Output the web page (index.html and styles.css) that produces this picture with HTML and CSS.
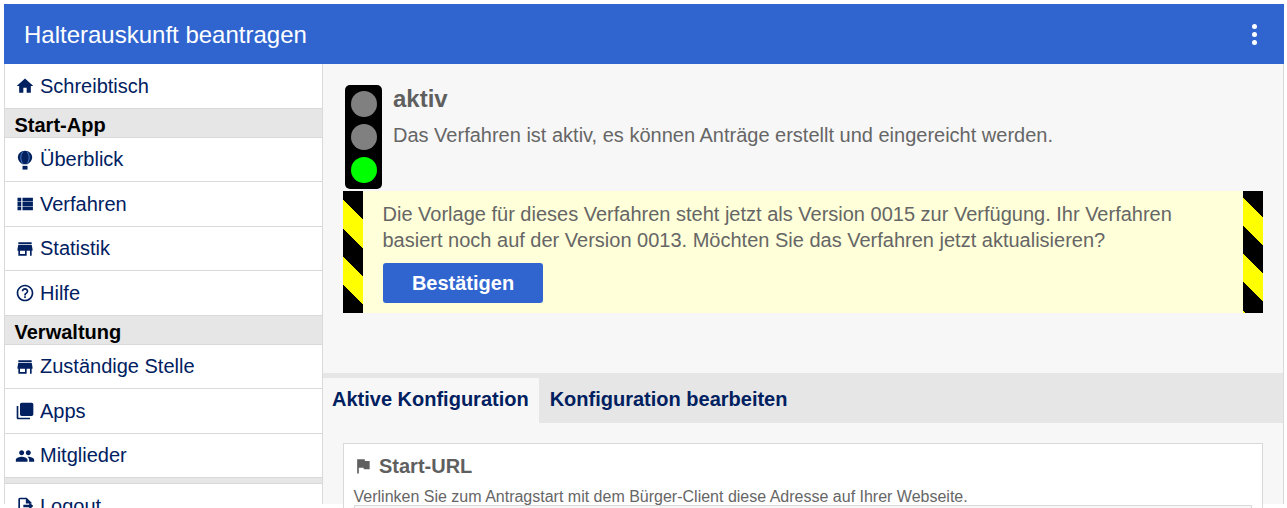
FILE: index.html
```html
<!DOCTYPE html>
<html lang="de">
<head>
<meta charset="utf-8">
<title>Halterauskunft beantragen</title>
<link rel="stylesheet" href="styles.css">
</head>
<body>
<div class="app">
  <header class="topbar">
    <span class="topbar-title">Halterauskunft beantragen</span>
    <span class="kebab"><i></i><i></i><i></i></span>
  </header>
  <div class="body-row">
    <nav class="sidebar">
      <a class="nav-item"><svg class="icon" viewBox="0 0 24 24"><path d="M10 20v-6h4v6h5v-8h3L12 3 2 12h3v8z"/></svg>Schreibtisch</a>
      <div class="nav-head">Start-App</div>
      <a class="nav-item"><svg class="icon" viewBox="0 0 24 24"><path d="M12 1C7 1 3.400 4.600 3.400 9c0 3.500 2.800 6.500 5.600 8h6c2.800-1.500 5.600-4.500 5.600-8C20.600 4.600 17 1 12 1z"/><path class="cut" d="M9.600 2C7.800 4 7 6.500 7 9c0 2.700 1 5.300 2.400 7.500M14.400 2C16.200 4 17 6.500 17 9c0 2.700-1 5.300-2.400 7.500"/><path d="M9 19h6v4.500H9z"/></svg>Überblick</a>
      <a class="nav-item"><svg class="icon" viewBox="0 0 24 24"><path d="M3 14.300h4.500V9.700H3zm0 5.200h4.500v-4.600H3zM3 9.100h4.500V4.500H3zm6 5.200h12.500V9.700H9zm0 5.200h12.500v-4.600H9zM9 4.500v4.600h12.500V4.500z"/></svg>Verfahren</a>
      <a class="nav-item"><svg class="icon" viewBox="0 0 24 24"><path d="M20 4H4v2h16V4zm1 10v-2l-1-5H4l-1 5v2h1v6h10v-6h4v6h2v-6h1zm-9 4H6v-4h6v4z"/></svg>Statistik</a>
      <a class="nav-item"><svg class="icon" viewBox="0 0 24 24"><path d="M11 18h2v-2h-2v2zm1-16C6.480 2 2 6.480 2 12s4.480 10 10 10 10-4.480 10-10S17.520 2 12 2zm0 18c-4.410 0-8-3.590-8-8s3.590-8 8-8 8 3.590 8 8-3.590 8-8 8zm0-14c-2.210 0-4 1.790-4 4h2c0-1.100.9-2 2-2s2 .9 2 2c0 2-3 1.750-3 5h2c0-2.250 3-2.500 3-5 0-2.210-1.790-4-4-4z"/></svg>Hilfe</a>
      <div class="nav-head">Verwaltung</div>
      <a class="nav-item"><svg class="icon" viewBox="0 0 24 24"><path d="M20 4H4v2h16V4zm1 10v-2l-1-5H4l-1 5v2h1v6h10v-6h4v6h2v-6h1zm-9 4H6v-4h6v4z"/></svg>Zuständige Stelle</a>
      <a class="nav-item"><svg class="icon" viewBox="0 0 24 24"><path d="M4 6H2v14c0 1.100.9 2 2 2h14v-2H4V6zm16-4H8c-1.100 0-2 .9-2 2v12c0 1.100.9 2 2 2h12c1.100 0 2-.9 2-2V4c0-1.100-.9-2-2-2z"/></svg>Apps</a>
      <a class="nav-item"><svg class="icon" viewBox="0 0 24 24"><path d="M16 11c1.660 0 2.990-1.340 2.990-3S17.660 5 16 5c-1.660 0-3 1.340-3 3s1.340 3 3 3zm-8 0c1.660 0 2.990-1.340 2.990-3S9.660 5 8 5C6.340 5 5 6.340 5 8s1.340 3 3 3zm0 2c-2.330 0-7 1.170-7 3.500V19h14v-2.500c0-2.330-4.670-3.500-7-3.500zm8 0c-.29 0-.62.02-.97.05 1.160.84 1.970 1.970 1.970 3.450V19h6v-2.500c0-2.330-4.670-3.500-7-3.500z"/></svg>Mitglieder</a>
      <div class="nav-gap"></div>
      <a class="nav-item"><svg class="icon" viewBox="0 0 24 24"><path d="M14 2H6a2 2 0 0 0-2 2v16a2 2 0 0 0 2 2h12a2 2 0 0 0 2-2v-2h-2v2H6V4h7v5h7V8z"/><path d="M10 10.500h7V7.500l5 4.500-5 4.500v-3h-7z"/></svg>Logout</a>
    </nav>
    <main class="content">
      <section class="status">
        <div class="traffic-light"><i class="lamp"></i><i class="lamp"></i><i class="lamp lamp-on"></i></div>
        <div class="status-text">
          <h2 class="status-title">aktiv</h2>
          <p class="status-desc">Das Verfahren ist aktiv, es können Anträge erstellt und eingereicht werden.</p>
        </div>
      </section>
      <section class="notice">
        <div class="stripe stripe-left"></div>
        <div class="notice-body">
          <p class="notice-text">Die Vorlage für dieses Verfahren steht jetzt als Version 0015 zur Verfügung. Ihr Verfahren basiert noch auf der Version 0013. Möchten Sie das Verfahren jetzt aktualisieren?</p>
          <button class="btn" type="button">Bestätigen</button>
        </div>
        <div class="stripe stripe-right"></div>
      </section>
      <div class="tabs">
        <span class="tab tab-active">Aktive Konfiguration</span>
        <span class="tab tab-idle">Konfiguration bearbeiten</span>
      </div>
      <section class="panel-wrap">
        <div class="panel">
          <h3 class="panel-title"><svg class="flag" viewBox="0 0 24 24"><path d="M14.400 6L14 4H5v17h2v-7h5.600l.4 2h7V6z"/></svg>Start-URL</h3>
          <p class="panel-desc">Verlinken Sie zum Antragstart mit dem Bürger-Client diese Adresse auf Ihrer Webseite.</p>
          <div class="url-field"></div>
        </div>
      </section>
    </main>
  </div>
</div>
</body>
</html>
```

FILE: styles.css
```css
html, body {
  margin: 0;
  padding: 0;
  height: 508px;
  overflow: hidden;
  background: #fff;
}
* { box-sizing: border-box; }
body { padding: 4px 3px 0 4px; font-family: "Liberation Sans", Arial, sans-serif; }
.app { width: 1280px; }
.topbar {
  height: 60px;
  background: #3065d0;
  color: #fff;
  display: flex;
  align-items: center;
  justify-content: space-between;
  padding: 1px 27px 0 20px;
}
.topbar-title { font-size: 24px; }
.kebab { display: flex; flex-direction: column; gap: 3px; margin-top: -1px; }
.kebab i { display: block; width: 5px; height: 5px; border-radius: 50%; background: #fff; }
.body-row { display: flex; align-items: stretch; height: 440px; }
.sidebar {
  width: 319px;
  flex: none;
  border-left: 1px solid #d9d9d9;
  border-right: 1px solid #d9d9d9;
  display: flex;
  flex-direction: column;
}
.nav-item {
  height: 44.5px;
  flex: none;
  display: flex;
  align-items: center;
  padding: 0.6px 0 0 10px;
  font-size: 20px;
  color: #00205f;
  border-bottom: 1px solid #d9d9d9;
  background: #fff;
}
.icon { width: 20px; height: 20px; fill: #00205f; margin-right: 5px; flex: none; }
.icon .cut { fill: none; stroke: #5a8fd8; stroke-width: 1; }
.nav-head {
  height: 29px;
  flex: none;
  background: #e6e6e6;
  border-bottom: 1px solid #d9d9d9;
  color: #000;
  font-weight: bold;
  font-size: 20px;
  line-height: 32px;
  padding-left: 9.5px;
}
.nav-gap { height: 6px; flex: none; background: #e6e6e6; border-bottom: 1px solid #d9d9d9; }
.content { flex: 1; background: #f7f7f7; border-right: 1px solid #d9d9d9; min-width: 0; }
.status { display: flex; padding: 21px 20px 0 22px; height: 127px; gap: 11px; }
.traffic-light {
  width: 37px;
  height: 104px;
  background: #000;
  border-radius: 5px;
  display: flex;
  flex-direction: column;
  align-items: center;
  gap: 7px;
  padding-top: 6px;
  flex: none;
}
.lamp { display: block; width: 26px; height: 26px; border-radius: 50%; background: #808080; }
.lamp-on { background: #0f0; }
.status-title { margin: 0; font-size: 24px; line-height: 28px; color: #5f5f5f; font-weight: bold; }
.status-desc { margin: 8px 0 0; font-size: 20px; line-height: 28px; color: #666; }
.notice { display: flex; width: 920px; height: 122px; margin-left: 20px; background: #ffffd9; }
.stripe { width: 20px; flex: none; }
.stripe-left { background: repeating-linear-gradient(45deg, #000 0, #000 20px, #ff0 20px, #ff0 40px); }
.stripe-right { background: repeating-linear-gradient(45deg, #ff0 0, #ff0 2px, #000 2px, #000 22px, #ff0 22px, #ff0 40px); }
.notice-body { flex: 1; padding: 10px 20px 0; }
.notice-text { margin: 0 0 0 -0.5px; font-size: 20px; line-height: 26px; color: #666; }
.btn {
  display: block;
  width: 160px;
  height: 40px;
  margin-top: 10px;
  border: 0;
  border-radius: 3px;
  background: #3065d0;
  color: #fff;
  font: bold 20px "Liberation Sans", Arial, sans-serif;
}
.tabs {
  margin-top: 60px;
  height: 50px;
  background: #e6e6e6;
  display: flex;
  align-items: flex-end;
}
.tab {
  height: 45px;
  line-height: 43px;
  font-size: 20px;
  font-weight: bold;
  color: #00205f;
  padding: 0 10px 0 9px;
}
.tab-active { background: #f7f7f7; }
.tab-idle { padding-left: 11px; }
.panel-wrap { padding: 20px 20px 0; }
.panel {
  background: #fff;
  border: 1px solid #d9d9d9;
  height: 100px;
  padding: 10px 10px 0;
}
.panel-title {
  margin: 0;
  display: flex;
  align-items: center;
  font-size: 20px;
  line-height: 24px;
  color: #5f5f5f;
}
.flag { width: 20px; height: 20px; fill: #5f5f5f; margin: 0 6px 0 -1px; }
.panel-desc { margin: 11px 0 0 -0.5px; font-size: 16px; line-height: 16px; color: #666; }
.url-field { height: 40px; border: 1px solid #d9d9d9; background: #f7f7f7; }
```
